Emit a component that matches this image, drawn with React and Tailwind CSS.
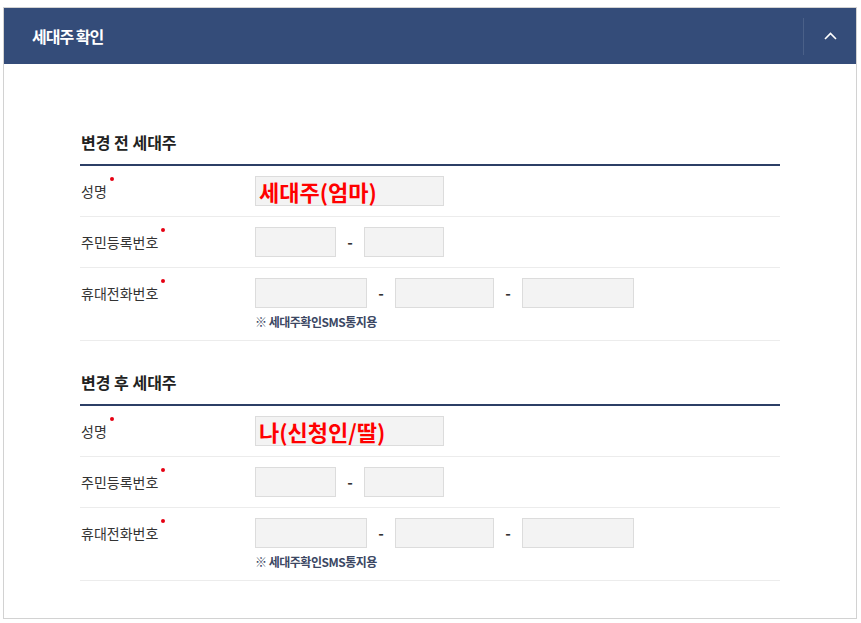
import React from 'react';

const font = { fontFamily: '"Noto Sans CJK KR", "Noto Sans", sans-serif' };

const Label = ({ children }) => (
  <div className="w-[175px] shrink-0 pl-[1px] text-[14px] text-[#333] leading-[30px]">
    <span className="relative">
      {children}
      <span className="absolute -right-[7px] -top-[4px] w-[4px] h-[4px] rounded-full bg-[#e60012]" />
    </span>
  </div>
);

const Box = ({ w, children }) => (
  <div className={`${w} h-[30px] bg-[#f3f3f3] border border-[#dcdcdc] flex items-center pl-[3px] text-[22px] font-bold text-[#ff0000] leading-none`}>
    {children}
  </div>
);

const Dash = ({ w }) => (
  <span className={`${w} text-center text-[15px] font-bold text-[#333]`}>-</span>
);

const Section = ({ title, name }) => (
  <div>
    <h3 className="text-[16px] font-bold text-[#222] leading-[20px] mb-[12px] pl-[1px]">{title}</h3>
    <div className="border-t-2 border-[#2c3f66]">
      <div className="flex items-center py-[10px] border-b border-[#ececec]">
        <Label>성명</Label>
        <Box w="w-[189px]">{name}</Box>
      </div>
      <div className="flex items-center py-[10px] border-b border-[#ececec]">
        <Label>주민등록번호</Label>
        <Box w="w-[81px]" />
        <Dash w="w-[28px]" />
        <Box w="w-[80px]" />
      </div>
      <div className="flex items-start pt-[10px] pb-[10px] border-b border-[#ececec]">
        <Label>휴대전화번호</Label>
        <div>
          <div className="flex items-center">
            <Box w="w-[112px]" />
            <Dash w="w-[28px]" />
            <Box w="w-[99px]" />
            <Dash w="w-[28px]" />
            <Box w="w-[112px]" />
          </div>
          <p className="mt-[6px] text-[12px] font-bold text-[#3b4763] leading-[16px] tracking-[-0.5px]">※ 세대주확인SMS통지용</p>
        </div>
      </div>
    </div>
  </div>
);

export default function App() {
  return (
    <div className="bg-white w-[861px] h-[623px] pt-[7px]" style={font}>
      <div className="ml-[3px] w-[854px] border border-[#d2d2d2]">
        <div className="h-[56px] bg-[#344c79] flex items-center">
          <h2 className="flex-1 pl-[28px] text-[16px] font-bold text-white tracking-[-1px]">세대주 확인</h2>
          <div className="w-px h-[37px] bg-[#4a6088]" />
          <button className="w-[52px] h-full flex items-center justify-center text-white">
            <svg width="13" height="8" viewBox="0 0 13 8" fill="none">
              <path d="M1 7L6.5 1.5L12 7" stroke="white" strokeWidth="1.6" />
            </svg>
          </button>
        </div>
        <div className="pl-[76px] pr-[76px] pt-[68px] pb-[37px] flex flex-col gap-[31px]">
          <Section title="변경 전 세대주" name="세대주(엄마)" />
          <Section title="변경 후 세대주" name="나(신청인/딸)" />
        </div>
      </div>
    </div>
  );
}
